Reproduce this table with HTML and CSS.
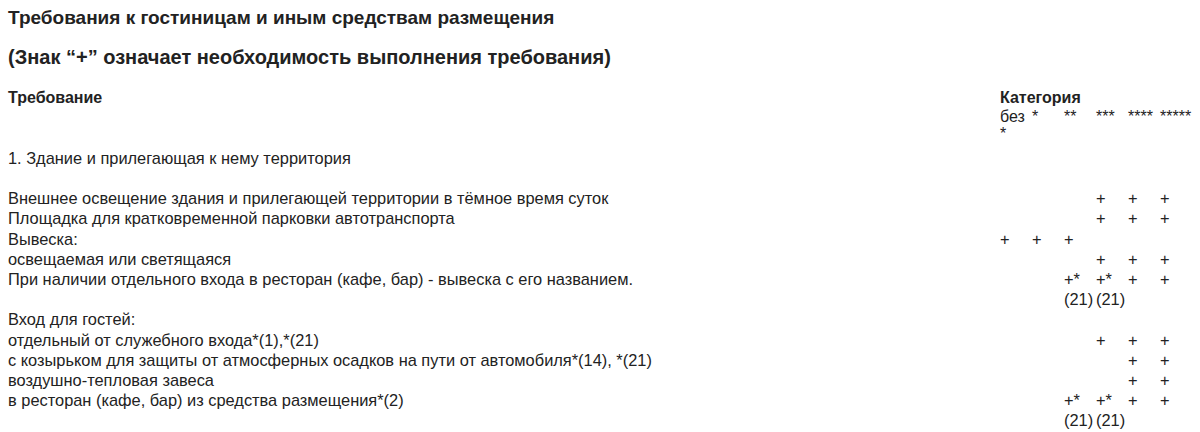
FILE: index.html
```html
<!DOCTYPE html>
<html lang="ru">
<head>
<meta charset="utf-8">
<link rel="stylesheet" href="styles.css">
</head>
<body>
<h3 class="title">Требования к гостиницам и иным средствам размещения</h3>
<h3 class="title title-note">(Знак “+” означает необходимость выполнения требования)</h3>
<table class="req">
  <colgroup>
    <col class="c-name">
    <col class="c-cat"><col class="c-cat"><col class="c-cat"><col class="c-cat"><col class="c-cat"><col class="c-cat">
  </colgroup>
  <thead>
    <tr class="h1">
      <th class="name">Требование</th>
      <th class="cat" colspan="6">Категория</th>
    </tr>
    <tr class="h2">
      <td></td>
      <td class="stars">без *</td><td class="stars">*</td><td class="stars">**</td><td class="stars">***</td><td class="stars">****</td><td class="stars">*****</td>
    </tr>
  </thead>
  <tbody>
    <tr><td>1. Здание и прилегающая к нему территория</td><td></td><td></td><td></td><td></td><td></td><td></td></tr>
    <tr class="blank"><td></td><td></td><td></td><td></td><td></td><td></td><td></td></tr>
    <tr><td>Внешнее освещение здания и прилегающей территории в тёмное время суток</td><td></td><td></td><td></td><td>+</td><td>+</td><td>+</td></tr>
    <tr><td>Площадка для кратковременной парковки автотранспорта</td><td></td><td></td><td></td><td>+</td><td>+</td><td>+</td></tr>
    <tr><td>Вывеска:</td><td>+</td><td>+</td><td>+</td><td></td><td></td><td></td></tr>
    <tr><td>освещаемая или светящаяся</td><td></td><td></td><td></td><td>+</td><td>+</td><td>+</td></tr>
    <tr><td>При наличии отдельного входа в ресторан (кафе, бар) - вывеска с его названием.</td><td></td><td></td><td>+*<br>(21)</td><td>+*<br>(21)</td><td>+</td><td>+</td></tr>
    <tr><td>Вход для гостей:</td><td></td><td></td><td></td><td></td><td></td><td></td></tr>
    <tr><td>отдельный от служебного входа*(1),*(21)</td><td></td><td></td><td></td><td>+</td><td>+</td><td>+</td></tr>
    <tr><td>с козырьком для защиты от атмосферных осадков на пути от автомобиля*(14), *(21)</td><td></td><td></td><td></td><td></td><td>+</td><td>+</td></tr>
    <tr><td>воздушно-тепловая завеса</td><td></td><td></td><td></td><td></td><td>+</td><td>+</td></tr>
    <tr><td>в ресторан (кафе, бар) из средства размещения*(2)</td><td></td><td></td><td>+*<br>(21)</td><td>+*<br>(21)</td><td>+</td><td>+</td></tr>
  </tbody>
</table>
</body>
</html>
```

FILE: styles.css
```css
body {
  margin: 0;
  padding: 0 8px;
  font-family: "Liberation Sans", Arial, sans-serif;
  color: #222;
  background: #fff;
}
.title {
  margin: 0;
  font-size: 19px;
  font-weight: 700;
  line-height: 22px;
  color: #222;
}
.title:first-child {
  padding-top: 7px;
}
.title + .title {
  margin-top: 17px;
}
.title-note {
  font-size: 20px;
}
.req {
  margin-top: 20px;
  width: 1184px;
  border-collapse: collapse;
  table-layout: fixed;
  font-size: 16.4px;
  line-height: 20.2px;
}
.c-name { width: 992px; }
.c-cat { width: 32px; }
.req td, .req th {
  padding: 0;
  vertical-align: top;
  text-align: left;
  font-weight: 400;
}
.req th.name,
.req th.cat {
  font-size: 16px;
  font-weight: 700;
}
.h1 th {
  line-height: 20px;
}
.h2 td {
  font-size: 16px;
  line-height: 17px;
  padding-bottom: 6px;
}
.blank td {
  height: 20px;
}
```
